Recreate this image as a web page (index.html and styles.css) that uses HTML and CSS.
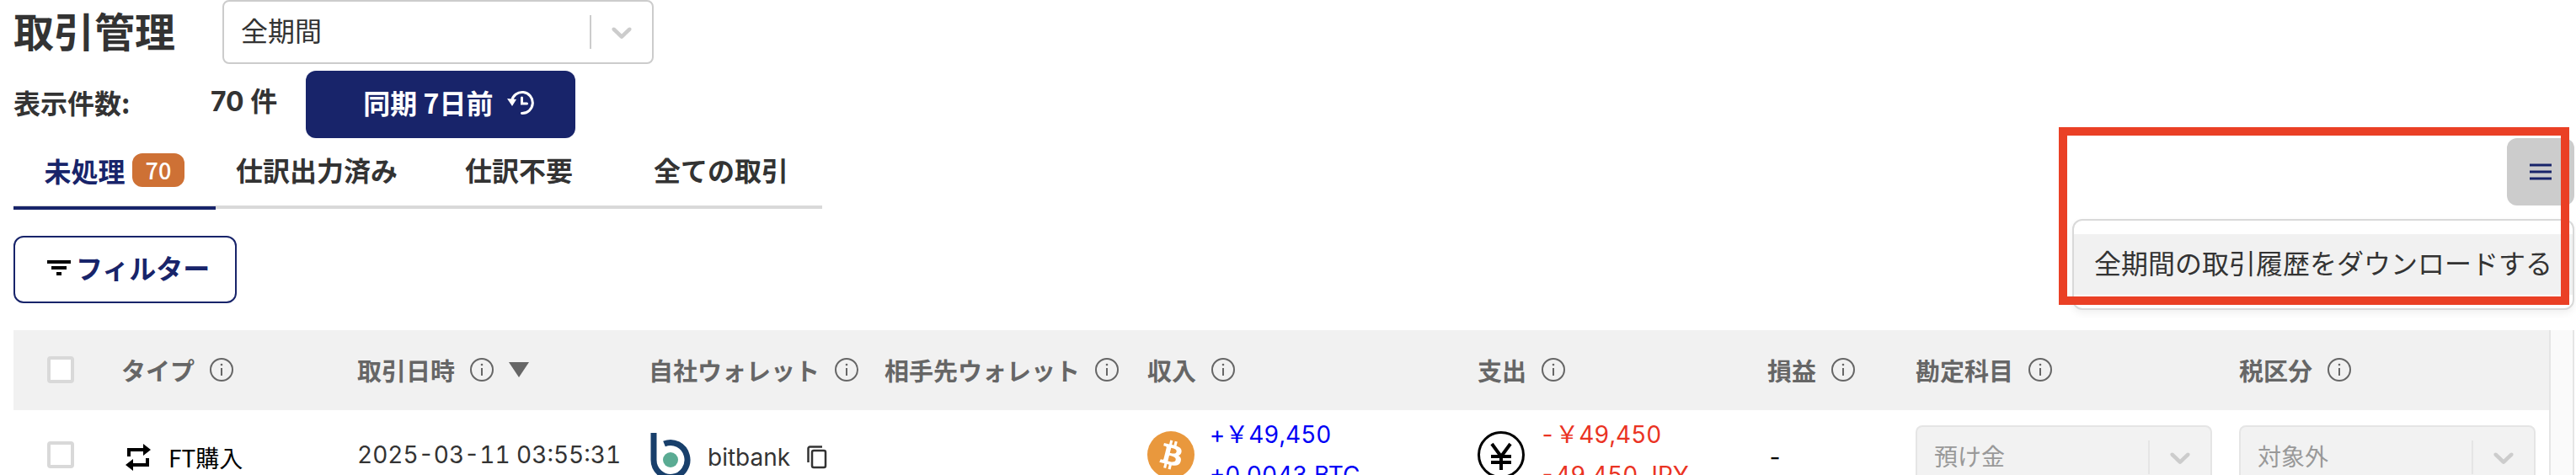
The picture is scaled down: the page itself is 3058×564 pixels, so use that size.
FILE: index.html
```html
<!DOCTYPE html>
<html lang="ja">
<head>
<meta charset="UTF-8">
<meta name="viewport" content="width=device-width, initial-scale=1.0">
<title>取引管理</title>
<link rel="stylesheet" href="styles.css">
</head>
<body>
<!-- shared icons -->
<svg class="sprite" aria-hidden="true">
    <symbol id="info" viewBox="0 0 28 28">
        <circle cx="14" cy="14" r="13" fill="none" stroke="currentColor" stroke-width="2"/>
        <path d="M14 12v9" stroke="currentColor" stroke-width="2"/>
        <circle cx="14" cy="8" r="1.3" fill="currentColor"/>
    </symbol>
    <symbol id="chevron" viewBox="0 0 20 20">
        <path fill="currentColor" d="M4.516 7.548c0.436-0.446 1.043-0.481 1.576 0l3.908 3.747 3.908-3.747c0.533-0.481 1.141-0.446 1.574 0 0.436 0.445 0.408 1.197 0 1.615-0.406 0.418-4.695 4.502-4.695 4.502-0.217 0.223-0.502 0.335-0.787 0.335s-0.57-0.112-0.789-0.335c0 0-4.287-4.084-4.695-4.502s-0.436-1.17 0-1.615z"/>
    </symbol>
</svg>
<header class="page-header">
    <div class="title-row">
        <h1>取引管理</h1>
        <div class="select-box period">
            <select id="period" aria-label="期間">
                <option>全期間</option>
            </select>
            <span class="select-arrow"><svg><use href="#chevron"/></svg></span>
        </div>
    </div>
    <div class="count-row">
        <span class="count-label">表示件数:</span>
        <span class="count">70 件</span>
        <button type="button" class="sync-btn">同期 7日前
            <svg viewBox="0 0 34 30" fill="none" stroke="currentColor" stroke-width="3" stroke-linecap="round">
                <path d="M6.500 14a12.500 12.500 0 1 1 12 14.500"/>
                <path d="M18.500 10v7h6"/>
                <path d="M1 11l11 1-5 8z" fill="currentColor" stroke="none"/>
            </svg>
        </button>
    </div>
</header>
<main>
    <div class="tab-row">
        <nav class="tabs">
            <a href="#" class="tab active">未処理<span class="badge">70</span></a>
            <a href="#" class="tab">仕訳出力済み</a>
            <a href="#" class="tab">仕訳不要</a>
            <a href="#" class="tab">全ての取引</a>
        </nav>
        <div class="menu">
            <button type="button" class="menu-btn" aria-label="メニュー">
                <svg viewBox="0 0 28 24" stroke="currentColor" stroke-width="3">
                    <path d="M1 4h26M1 12h26M1 20h26"/>
                </svg>
            </button>
            <div class="menu-list">
                <button type="button" class="menu-item">全期間の取引履歴をダウンロードする</button>
            </div>
            <div class="highlight"></div>
        </div>
    </div>
    <button type="button" class="filter-btn">
        <svg viewBox="0 0 28 20"><path d="M0 2h28v4H0zM5 9h18v4H5zM11 16h6v4h-6z"/></svg>フィルター
    </button>
    <div class="table-wrap">
        <table>
            <colgroup>
                <col class="c-check"><col class="c-type"><col class="c-date"><col class="c-own"><col class="c-other">
                <col class="c-in"><col class="c-out"><col class="c-profit"><col class="c-account"><col class="c-tax">
            </colgroup>
            <thead>
                <tr>
                    <th><input type="checkbox" aria-label="すべて選択"></th>
                    <th><span class="th">タイプ<svg><use href="#info"/></svg></span></th>
                    <th><span class="th">取引日時<svg><use href="#info"/></svg><span class="sort"></span></span></th>
                    <th><span class="th">自社ウォレット<svg><use href="#info"/></svg></span></th>
                    <th><span class="th">相手先ウォレット<svg><use href="#info"/></svg></span></th>
                    <th><span class="th">収入<svg><use href="#info"/></svg></span></th>
                    <th><span class="th">支出<svg><use href="#info"/></svg></span></th>
                    <th><span class="th">損益<svg><use href="#info"/></svg></span></th>
                    <th><span class="th">勘定科目<svg><use href="#info"/></svg></span></th>
                    <th><span class="th">税区分<svg><use href="#info"/></svg></span></th>
                </tr>
            </thead>
            <tbody>
                <tr>
                    <td class="raised"><input type="checkbox" aria-label="選択"></td>
                    <td>
                        <div class="type">
                            <svg viewBox="0 0 32 32" fill="none" stroke="#000" stroke-width="4">
                                <path d="M5 15V7h18M27 17v8H9"/>
                                <path d="M22 0l9 7-9 7zM10 18l-9 7 9 7z" fill="#000" stroke="none"/>
                            </svg>FT購入
                        </div>
                    </td>
                    <td class="raised">2025-03-11 03:55:31</td>
                    <td>
                        <div class="wallet">
                            <svg class="wallet-logo" viewBox="0 0 48 58">
                                <path d="M4 0v32a20 20.500 0 1 0 12.500-19" fill="none" stroke="#183f6b" stroke-width="7"/>
                                <circle cx="24" cy="32" r="9" fill="#5aab93"/>
                            </svg>
                            bitbank
                            <button type="button" class="copy-btn" aria-label="コピー">
                                <svg viewBox="0 0 24 28" fill="none" stroke="currentColor" stroke-width="2.500">
                                    <rect x="6" y="6" width="16" height="20" rx="2"/>
                                    <path d="M1.500 20V3.500a2 2 0 0 1 2-2H18"/>
                                </svg>
                            </button>
                        </div>
                    </td>
                    <td></td>
                    <td class="raised">
                        <div class="amount in">
                            <svg viewBox="0 0 32 32">
                                <circle cx="16" cy="16" r="16" fill="#e9983d"/>
                                <path fill="#fff" d="M23.189 14.020c.314-2.096-1.283-3.223-3.465-3.975l.708-2.840-1.728-.43-.690 2.765c-.454-.114-.920-.220-1.385-.326l.695-2.783L15.596 6l-.708 2.839c-.376-.086-.746-.170-1.104-.260l.002-.009-2.384-.595-.460 1.846s1.283.294 1.256.312c.700.175.826.638.805 1.006l-.806 3.235c.048.012.110.030.180.057l-.183-.045-1.130 4.532c-.086.212-.303.531-.793.410.018.025-1.256-.313-1.256-.313l-.858 1.978 2.250.561c.418.105.828.215 1.231.318l-.715 2.872 1.727.430.708-2.840c.472.127.930.245 1.378.357l-.706 2.828 1.728.430.715-2.866c2.948.558 5.164.333 6.097-2.333.752-2.146-.037-3.385-1.588-4.192 1.130-.260 1.980-1.003 2.207-2.538zm-3.950 5.538c-.533 2.147-4.148.986-5.320.695l.950-3.805c1.172.293 4.929.872 4.370 3.110zm.535-5.569c-.487 1.953-3.495.960-4.470.717l.860-3.450c.975.243 4.118.696 3.610 2.733z"/>
                            </svg>
                            <div>+￥49,450<br>+0.0043 BTC</div>
                        </div>
                    </td>
                    <td class="raised">
                        <div class="amount out">
                            <svg viewBox="0 0 56 56" fill="none" stroke="#000">
                                <circle cx="28" cy="28" r="26.500" stroke-width="3"/>
                                <path d="M17 15l11 15 11-15M28 29v17M16 30h24M16 37h24" stroke-width="4"/>
                            </svg>
                            <div>-￥49,450<br>-49,450 JPY</div>
                        </div>
                    </td>
                    <td class="profit">-</td>
                    <td>
                        <div class="select-box">
                            <select aria-label="勘定科目" disabled>
                                <option>預け金</option>
                            </select>
                            <span class="select-arrow"><svg><use href="#chevron"/></svg></span>
                        </div>
                    </td>
                    <td>
                        <div class="select-box">
                            <select aria-label="税区分" disabled>
                                <option>対象外</option>
                            </select>
                            <span class="select-arrow"><svg><use href="#chevron"/></svg></span>
                        </div>
                    </td>
                </tr>
            </tbody>
        </table>
        <div class="scroll-track"></div>
    </div>
</main>
</body>
</html>
```
FILE: styles.css
```css
* {
    box-sizing: border-box;
}

body {
    margin: 0;
    padding: 0 2px 0 16px;
    height: 100vh;
    overflow: hidden;
    background-color: #fff;
    color: #333;
    font-family: "Noto Sans CJK JP", sans-serif;
    font-size: 32px;
    line-height: 48px;
}

button, select {
    font-family: inherit;
    font-size: inherit;
    line-height: inherit;
    color: inherit;
}

button {
    cursor: pointer;
}

svg {
    flex: none;
}

.sprite {
    display: none;
}

/* header */
.title-row {
    display: flex;
    align-items: center;
    gap: 56px;
}

h1 {
    margin: 0;
    padding-bottom: 6px;
    font-size: 48px;
    font-weight: 700;
}

.select-box {
    display: grid;
    height: 76px;
}

.select-box select {
    grid-area: 1 / 1;
    appearance: none;
    padding: 0 20px;
    border: 2px solid #ccc;
    border-radius: 8px;
    background-color: #fff;
}

.select-box select:disabled {
    border-color: #e5e5e5;
    background-color: #f2f2f2;
    color: #999;
    opacity: 1;
}

.select-arrow {
    grid-area: 1 / 1;
    place-self: center end;
    display: flex;
    align-items: center;
    height: 40px;
    padding: 0 18px 0 16px;
    border-left: 2px solid #ccc;
    color: #ccc;
    pointer-events: none;
}

.select-arrow svg {
    width: 40px;
    height: 40px;
}

select:disabled + .select-arrow {
    border-color: #e5e5e5;
}

.period {
    width: 512px;
}

.period select {
    padding-bottom: 6px;
}

.count-row {
    display: flex;
    align-items: center;
    margin-top: 8px;
    font-weight: 700;
}

.count-label {
    width: 234px;
}

.count-label, .count {
    padding-bottom: 6px;
}

.count {
    margin-right: 34px;
    font-family: Inter, "Noto Sans CJK JP", sans-serif;
}

.sync-btn {
    display: flex;
    align-items: center;
    gap: 16px;
    height: 80px;
    padding: 0 48px 6px 68px;
    border: none;
    border-radius: 12px;
    background-color: #18246a;
    color: #fff;
    font-weight: 700;
}

.sync-btn svg {
    width: 34px;
    height: 30px;
}

/* tabs */
.tab-row {
    display: flex;
    justify-content: space-between;
    align-items: flex-start;
}

.tabs {
    display: flex;
    border-bottom: 4px solid #d9d9d9;
}

.tab {
    display: flex;
    align-items: center;
    justify-content: center;
    gap: 8px;
    width: 240px;
    height: 80px;
    padding-bottom: 6px;
    color: #333;
    font-weight: 700;
    text-decoration: none;
}

.tab.active {
    height: 85px;
    margin-bottom: -5px;
    border-bottom: 4px solid #18246a;
    color: #18246a;
}

.badge {
    padding: 0 16px;
    border-radius: 12px;
    background-color: #ce7135;
    color: #fff;
    font-size: 27px;
    font-weight: 500;
    line-height: 40px;
}

/* menu */
.menu {
    position: relative;
}

.menu-btn {
    display: flex;
    align-items: center;
    justify-content: center;
    width: 80px;
    height: 80px;
    border: none;
    border-radius: 12px;
    background-color: #ccc;
    color: #18246a;
}

.menu-btn svg {
    width: 28px;
    height: 24px;
}

.menu-list {
    position: absolute;
    top: 96px;
    right: 0;
    padding: 16px 0;
    border: 2px solid #d9d9d9;
    border-radius: 12px;
    background-color: #fff;
    box-shadow: 0 4px 8px rgba(0, 0, 0, 0.06);
}

.menu-item {
    display: block;
    padding: 9px 24px 15px;
    border: none;
    background-color: #f1f1f1;
    white-space: nowrap;
}

.highlight {
    position: absolute;
    top: -13px;
    right: 6px;
    width: 606px;
    height: 211px;
    border: 10px solid #ea4025;
    pointer-events: none;
}

.filter-btn {
    display: flex;
    align-items: center;
    gap: 6px;
    height: 80px;
    margin: 32px 0;
    padding: 0 30px 6px 38px;
    border: 2px solid #18246a;
    border-radius: 12px;
    background-color: #fff;
    color: #18246a;
    font-weight: 700;
}

.filter-btn svg {
    width: 28px;
    height: 20px;
    fill: #000;
}

/* table */
.table-wrap {
    display: flex;
}

table {
    flex: 1;
    width: 100%;
    table-layout: fixed;
    border-collapse: collapse;
}

.c-check { width: 128px; }
.c-type { width: 280px; }
.c-date { width: 346px; }
.c-own { width: 280px; }
.c-other { width: 312px; }
.c-in { width: 392px; }
.c-out { width: 344px; }
.c-profit { width: 176px; }
.c-account { width: 384px; }

th, td {
    padding: 0;
    text-align: left;
    white-space: nowrap;
}

th {
    height: 95px;
    padding-bottom: 2px;
    background-color: #f1f1f1;
    color: #666;
    font-size: 29px;
    font-weight: 700;
}

td {
    height: 112px;
    font-family: Inter, "Noto Sans CJK JP", sans-serif;
    font-size: 28px;
    font-variant-numeric: tabular-nums;
}

.th {
    display: flex;
    align-items: center;
    gap: 18px;
}

.th svg {
    width: 28px;
    height: 28px;
}

.sort {
    border: 12px solid transparent;
    border-top: 18px solid #666;
    border-bottom: none;
}

input[type="checkbox"] {
    display: block;
    appearance: none;
    width: 32px;
    height: 32px;
    margin: 0 40px;
    border: 4px solid #d9d9d9;
    border-radius: 4px;
    background-color: #fff;
}

.raised {
    padding-bottom: 6px;
}

.type {
    display: flex;
    align-items: center;
    gap: 20px;
    padding-left: 4px;
    color: #000;
    font-family: "Noto Sans CJK JP", sans-serif;
}

.type svg {
    width: 32px;
    height: 32px;
}

.wallet {
    display: flex;
    align-items: center;
    gap: 20px;
    padding-left: 2px;
}

.wallet-logo {
    width: 48px;
    height: 58px;
}

.copy-btn {
    padding: 0;
    border: none;
    background: none;
}

.copy-btn svg {
    display: block;
    width: 24px;
    height: 28px;
}

.amount {
    display: flex;
    align-items: center;
    gap: 18px;
}

.amount svg {
    width: 56px;
    height: 56px;
}

.in {
    color: #0000f5;
}

.out {
    color: #ea3323;
}

.profit {
    color: #000;
}

td .select-box {
    width: 352px;
}

.scroll-track {
    width: 30px;
    border: 2px solid #e5e5e5;
    border-width: 0 2px;
    background-color: #fafafa;
}
```
